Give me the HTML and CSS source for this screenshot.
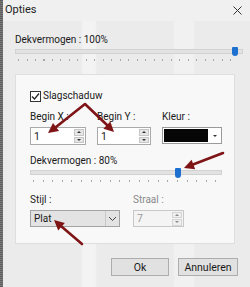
FILE: index.html
```html
<!DOCTYPE html>
<html>
<head>
<meta charset="utf-8">
<link rel="stylesheet" href="styles.css">
</head>
<body>
<div class="window">
  <div class="edge"></div>
  <div class="main">
    <div class="titlebar">
      <span class="title">Opties</span>
      <svg class="close" width="9" height="9" viewBox="0 0 9 9"><path d="M0.5 0.5L8.5 8.5M8.5 0.5L0.5 8.5" stroke="#333" stroke-width="1"/></svg>
    </div>
    <div class="content">
      <div class="label top-label">Dekvermogen : 100%</div>
      <div class="slider slider-wide">
        <div class="track"></div>
        <div class="ticks ticks-wide"></div>
        <div class="thumb thumb-wide"></div>
      </div>
      <div class="panel">
        <div class="check-row">
          <span class="checkbox"><svg width="9" height="9" viewBox="0 0 9 9"><path d="M1 4.5L3.5 7L8 1.5" fill="none" stroke="#222" stroke-width="1.2"/></svg></span>
          <span class="label">Slagschaduw</span>
        </div>
        <div class="field-row">
          <div class="field f-bx">
            <div class="label">Begin X :</div>
            <div class="spin"><span class="val">1</span><span class="spin-btns"><span class="sb"><i class="up"></i></span><span class="sb"><i class="down"></i></span></span></div>
          </div>
          <div class="field f-by">
            <div class="label">Begin Y :</div>
            <div class="spin"><span class="val">1</span><span class="spin-btns"><span class="sb"><i class="up"></i></span><span class="sb"><i class="down"></i></span></span></div>
          </div>
          <div class="field f-kl">
            <div class="label">Kleur :</div>
            <div class="color"><span class="swatch"></span><span class="color-btn"><i class="down"></i></span></div>
          </div>
        </div>
        <div class="label mid-label">Dekvermogen : 80%</div>
        <div class="slider slider-narrow">
          <div class="track"></div>
          <div class="ticks ticks-narrow"></div>
          <div class="thumb thumb-narrow"></div>
        </div>
        <div class="field-row row2">
          <div class="field f-st">
            <div class="label">Stijl :</div>
            <div class="combo"><span class="combo-val">Plat</span><span class="chev"><svg width="9" height="6" viewBox="0 0 9 6"><path d="M1 1L4.5 4.5L8 1" fill="none" stroke="#444" stroke-width="1"/></svg></span></div>
          </div>
          <div class="field f-sr">
            <div class="label dim">Straal :</div>
            <div class="spin disabled"><span class="val">7</span><span class="spin-btns"><span class="sb"><i class="up"></i></span><span class="sb"><i class="down"></i></span></span></div>
          </div>
        </div>
      </div>
      <div class="buttons">
        <div class="btn btn-ok">Ok</div>
        <div class="btn btn-cancel">Annuleren</div>
      </div>
    </div>
  </div>
  <svg class="arrows" width="250" height="287" viewBox="0 0 250 287">
    <g stroke="#7f1417" stroke-width="2.6" fill="none" stroke-linecap="round" stroke-linejoin="round">
      <polyline points="56,127 85,104 107,125"/>
      <line x1="223" y1="153" x2="193" y2="164.5"/>
      <line x1="82" y1="244" x2="61.5" y2="226.6"/>
    </g>
    <g fill="#7f1417">
      <polygon points="48,133 59,131 53,123"/>
      <polygon points="114,132 103.4,128.7 110.3,121.5"/>
      <polygon points="184,168 195.2,169.2 191.6,159.8"/>
      <polygon points="54,220 64.8,222.9 58.2,230.4"/>
    </g>
  </svg>
</div>
</body>
</html>
```

FILE: styles.css
```css
* { box-sizing: border-box; }
html, body { margin: 0; padding: 0; }
body {
  width: 250px;
  height: 287px;
  overflow: hidden;
  font-family: Roboto, "Open Sans", sans-serif;
  font-size: 10px;
  color: #1a1a1a;
}
.window {
  position: relative;
  display: flex;
  width: 250px;
  height: 287px;
  background: #ececec;
}
.edge {
  width: 3px;
  background: repeating-linear-gradient(0deg, #5e5e5e 0 1px, #7a7a7a 1px 2px);
}
.main {
  flex: 1;
  display: flex;
  flex-direction: column;
  background:
    linear-gradient(90deg, rgba(255,255,255,0) 0, rgba(255,255,255,0) 78px, rgba(255,255,255,0.4) 80px, rgba(255,255,255,0.4) 92px, rgba(255,255,255,0) 94px, rgba(255,255,255,0) 170px, rgba(255,255,255,0.3) 172px, rgba(255,255,255,0.3) 190px, rgba(255,255,255,0) 192px),
    #ebebeb;
}
.titlebar {
  height: 21px;
  display: flex;
  align-items: center;
  justify-content: space-between;
  padding: 0 8px 2px 2px;
  background: #f0f0f0;
}
.title { font-size: 11px; color: #222; }
.close { margin-top: 2px; }
.content {
  padding-left: 12px;
  display: flex;
  flex-direction: column;
}
.label { line-height: 12px; white-space: nowrap; }
.dim { color: #8a8a8a; }
.top-label { margin-top: 13px; }
.slider { position: relative; height: 14px; }
.slider-wide { margin-top: 2px; width: 228px; }
.slider-narrow { margin-top: 2px; width: 192px; height: 14px; }
.track {
  height: 5px;
  margin-top: 1px;
  background: #e2e2e2;
  border: 1px solid #d2d2d2;
}
.ticks { height: 2px; margin-top: 5px; }
.ticks-wide {
  margin-left: 3px;
  width: 221px;
  background: repeating-linear-gradient(90deg, #a8a8a8 0 1px, transparent 1px 8.5px);
}
.ticks-narrow {
  margin-left: 3px;
  width: 188px;
  background: repeating-linear-gradient(90deg, #a8a8a8 0 1px, transparent 1px 9.6px);
}
.thumb {
  position: absolute;
  width: 6px;
  height: 9px;
  background: #1d6fd0;
  border-radius: 1px 1px 3px 3px;
}
.thumb-wide { left: 217px; top: -1px; }
.thumb-narrow { left: 145px; top: -1px; height: 10px; }
.panel {
  margin-top: 12px;
  width: 220px;
  height: 170px;
  background: #f8f8f8;
  border: 1px solid #dedede;
  padding-left: 14px;
  display: flex;
  flex-direction: column;
}
.check-row {
  margin-top: 15px;
  display: flex;
  align-items: center;
  gap: 2px;
  height: 12px;
}
.checkbox {
  width: 11px;
  height: 11px;
  border: 1px solid #333;
  background: #fff;
  display: flex;
  align-items: center;
  justify-content: center;
}
.field-row {
  margin-top: 9px;
  display: flex;
  gap: 11px;
}
.row2 { margin-top: 11px; gap: 13px; }
.field { display: flex; flex-direction: column; }
.field .label { margin-bottom: 4px; }
.spin {
  height: 18px;
  border: 1px solid #a9a9a9;
  background: #fff;
  display: flex;
  align-items: center;
  justify-content: space-between;
  padding-left: 3px;
}
.f-bx .spin { width: 56px; }
.f-by .spin { width: 54px; }
.val { font-size: 10.5px; }
.spin-btns {
  width: 10px;
  height: 16px;
  display: flex;
  flex-direction: column;
  gap: 1px;
  padding: 1px 0;
  margin-right: 1px;
}
.sb {
  flex: 1;
  background: #e6e6e6;
  border: 1px solid #c6c6c6;
  display: flex;
  align-items: center;
  justify-content: center;
}
.up, .down { display: block; width: 0; height: 0; border-left: 2px solid transparent; border-right: 2px solid transparent; }
.up { border-bottom: 2px solid #333; }
.down { border-top: 2px solid #333; }
.color {
  width: 60px;
  height: 17px;
  border: 1px solid #9a9a9a;
  background: #fff;
  display: flex;
}
.swatch { width: 44px; background: #060606; margin: 1px; }
.color-btn { flex: 1; display: flex; align-items: center; justify-content: center; }
.mid-label { margin-top: 10px; }
.combo {
  width: 90px;
  height: 17px;
  border: 1px solid #a3a3a3;
  background: #e3e3e3;
  display: flex;
  align-items: center;
  justify-content: space-between;
  padding-left: 3px;
}
.combo-val { line-height: 12px; }
.chev { width: 14px; height: 15px; display: flex; align-items: center; justify-content: center; border-left: 1px solid #c8c8c8; }
.disabled { background: #f4f4f4; border-color: #c8c8c8; width: 51px; height: 17px; }
.disabled .val { color: #9a9a9a; }
.disabled .sb { background: #efefef; border-color: #d6d6d6; }
.disabled .up { border-bottom-color: #8a8a8a; }
.disabled .down { border-top-color: #8a8a8a; }
.buttons {
  margin-top: 14px;
  display: flex;
  justify-content: flex-end;
  gap: 9px;
  padding-right: 12px;
}
.btn {
  height: 18px;
  background: #e1e1e1;
  border: 1px solid #adadad;
  display: flex;
  align-items: center;
  justify-content: center;
  font-size: 10.5px;
}
.btn-ok { width: 58px; }
.btn-cancel { width: 60px; }
.arrows { position: absolute; left: 0; top: 0; pointer-events: none; }
```
